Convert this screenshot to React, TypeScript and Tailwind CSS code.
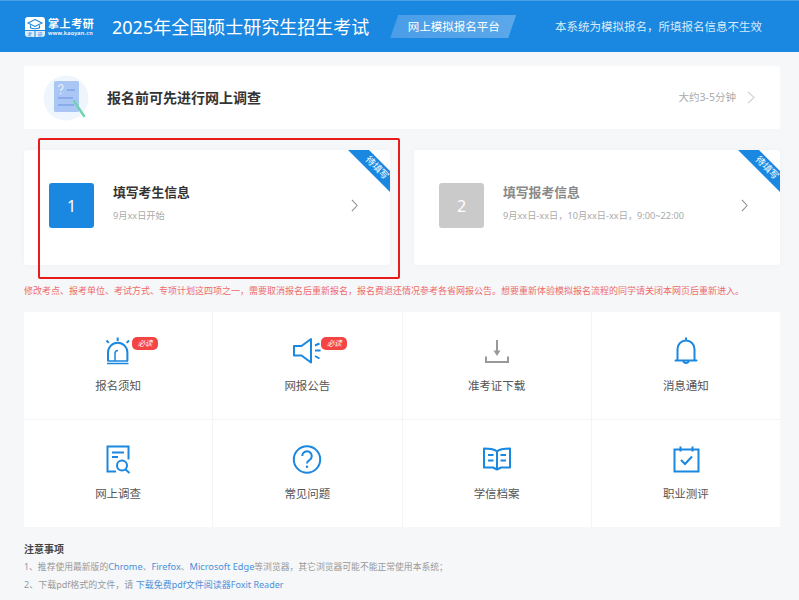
import type { ReactNode } from "react";

const font = "[font-family:'Noto_Sans','Noto_Sans_CJK_SC',sans-serif]";

function Chevron({ className }: { className: string }) {
  return (
    <svg viewBox="0 0 8 14" fill="none" stroke="currentColor" strokeWidth="1.1" preserveAspectRatio="none" className={className}>
      <path d="M1 1 7 7 1 13" />
    </svg>
  );
}

function Logo() {
  return (
    <svg viewBox="0 0 20 20" className="h-[20px] w-[20px] shrink-0">
      <path d="M3 0h14a3 3 0 0 1 3 3v10H0V3a3 3 0 0 1 3-3z" fill="#fff" />
      <path d="M10 2.6 17 6l-7 3.4L3 6z" fill="none" stroke="#1a87e0" strokeWidth="1.1" />
      <path d="M5.5 8.2v2.6c1.6 1.3 7.4 1.3 9 0V8.2" fill="none" stroke="#1a87e0" strokeWidth="1.1" />
      <path d="M0 14h9.5v6H3a3 3 0 0 1-3-3zM10.5 14H20v3a3 3 0 0 1-3 3h-6.5z" fill="#fff" fillOpacity=".85" />
      <text x="2.5" y="18.8" fontSize="4.4" fill="#1a87e0">考</text>
      <text x="13" y="18.8" fontSize="4.4" fill="#1a87e0">研</text>
    </svg>
  );
}

function SurveyArt() {
  return (
    <svg viewBox="0 0 46 46" className="h-[46px] w-[46px] shrink-0">
      <circle cx="23" cy="23" r="22.5" fill="#eef5fd" />
      <rect x="11" y="6" width="25" height="31" rx="1.5" fill="#a9c6f5" />
      <path d="M24 15h8M15 23h15M15 30h16" stroke="#7fa5e8" strokeWidth="1.3" />
      <path d="M15.5 12a2.3 2.3 0 1 1 3.3 2.1c-.9.5-1.1 1-1.1 1.9" fill="none" stroke="#eaf2fd" strokeWidth="1.2" />
      <circle cx="17.7" cy="18.5" r=".8" fill="#eaf2fd" />
      <path d="M31 26 41 41" stroke="#6fd3ae" strokeWidth="2.4" strokeLinecap="round" />
    </svg>
  );
}

function StepCard({
  num,
  title,
  sub,
  active,
}: {
  num: string;
  title: string;
  sub: string;
  active?: boolean;
}) {
  return (
    <div className="relative flex h-[115px] items-start rounded-[3px] bg-white pt-[33px] pr-[32px] pl-[25px] shadow-[0_0_6px_rgba(0,0,0,0.03)]">
      <div
        className={`flex h-[45px] w-[45px] shrink-0 items-center justify-center rounded-[3px] text-[16px] text-white ${
          active ? "bg-[#1a87e0]" : "bg-[#cacaca]"
        }`}
      >
        {num}
      </div>
      <div className="ml-[19px] min-w-0 flex-1">
        <div className={`text-[12.8px] leading-[19px] font-bold ${active ? "text-[#333333]" : "text-[#888888]"}`}>
          {title}
        </div>
        <div className="mt-[7px] text-[9.2px] leading-[14px] whitespace-nowrap text-[#aaaaaa]">{sub}</div>
      </div>
      <Chevron className="mt-[16px] h-[13px] w-[7px] shrink-0 text-[#888888]" />
      <div className="absolute top-0 right-0 h-[42px] w-[42px] bg-[#1a87e0] [clip-path:polygon(0_0,50%_0,100%_50%,100%_100%)]">
        <span className="absolute top-[11px] left-[15px] w-[26px] rotate-45 text-center text-[9.5px] leading-[12px] font-medium whitespace-nowrap text-[#e3f1fc]">
          待填写
        </span>
      </div>
    </div>
  );
}

const stroke = {
  fill: "none",
  stroke: "currentColor",
  strokeWidth: 2,
} as const;

const icons: Record<string, ReactNode> = {
  alarm: (
    <svg viewBox="0 0 30 30" className="h-[30px] w-[30px]" {...stroke}>
      <path d="M5 24V15.5a9.7 9.7 0 0 1 19.4 0V24" />
      <path d="M12 24v-7.5a3 3 0 0 1 3-3" strokeWidth="1.5" />
      <path d="M4.5 24h20.5M4 26.5h21.5" strokeWidth="1.5" />
      <path d="M14.7 0.5v3.6M3.5 3.5l2.3 2.4M26 3.5l-2.3 2.4" />
    </svg>
  ),
  horn: (
    <svg viewBox="0 0 30 30" className="h-[30px] w-[30px]" {...stroke}>
      <path d="M19 2v23.5L9.5 18.5H2V9h7.5z" strokeLinejoin="round" />
      <path d="M23 8.5l4.5-2M23 13.5h5.5M23 19l4.5 2.5" />
    </svg>
  ),
  download: (
    <svg viewBox="0 0 30 30" className="h-[30px] w-[30px]" {...stroke}>
      <path d="M15 3v13" />
      <path d="M11.5 13.5h7L15 19z" fill="currentColor" stroke="none" />
      <path d="M4 19.5V25h22v-5.5" />
    </svg>
  ),
  bell: (
    <svg viewBox="0 0 30 30" className="h-[30px] w-[30px]" {...stroke}>
      <path d="M6.5 23V12a8.5 8.5 0 0 1 17 0v11" />
      <path d="M4.5 23.5h21" strokeLinecap="round" />
      <path d="M15 0.5V3.5" />
      <path d="M12.3 24a2.8 2.8 0 0 0 5.4 0" />
    </svg>
  ),
  survey: (
    <svg viewBox="0 0 30 30" className="h-[30px] w-[30px]" {...stroke}>
      <path d="M13 26.5H4.5v-25h21v13" />
      <path d="M9 7.5h12M9 12h6" />
      <circle cx="19" cy="20.5" r="5" />
      <path d="M22.5 24.5 26.5 28" />
    </svg>
  ),
  question: (
    <svg viewBox="0 0 30 30" className="h-[30px] w-[30px]" {...stroke}>
      <circle cx="15" cy="14.5" r="13.2" />
      <path d="M10.2 11a4.8 4.8 0 1 1 7.2 4.2c-1.6.9-2.4 1.7-2.4 3.4" />
      <circle cx="15" cy="21.8" r="1.2" fill="currentColor" stroke="none" />
    </svg>
  ),
  book: (
    <svg viewBox="0 0 30 30" className="h-[30px] w-[30px]" {...stroke}>
      <path d="M15 6.5C13 4.5 10 3.5 2 3.5v19h9l4 2 4-2h9v-19c-8 0-11 1-13 3z" strokeLinejoin="round" />
      <path d="M15 6.5V24" />
      <path d="M6 10h5.5M6 15.5h5.5M18.5 10H24M18.5 15.5H24" />
    </svg>
  ),
  calendar: (
    <svg viewBox="0 0 30 30" className="h-[30px] w-[30px]" {...stroke}>
      <path d="M3.5 4.5h24v22h-24z" />
      <path d="M9.5 1.5v5M21.5 1.5v5" />
      <path d="M10 15l4 4 7-7.5" />
    </svg>
  ),
};

const entries = [
  { icon: "alarm", label: "报名须知", must: true },
  { icon: "horn", label: "网报公告", must: true },
  { icon: "download", label: "准考证下载", gray: true },
  { icon: "bell", label: "消息通知" },
  { icon: "survey", label: "网上调查" },
  { icon: "question", label: "常见问题" },
  { icon: "book", label: "学信档案" },
  { icon: "calendar", label: "职业测评" },
];

export default function App() {
  return (
    <div className={`relative h-[600px] overflow-hidden bg-[#f6f7f9] ${font}`}>
      <header className="flex h-[52px] items-center border-t border-[#4aa0e6] bg-[#1a87e0] pl-[25px] text-white">
        <Logo />
        <div className="ml-[3px] w-[48px]">
          <div className="text-[11px] leading-[13px] font-bold tracking-[0.6px] whitespace-nowrap">掌上考研</div>
          <div className="text-[5.5px] leading-[7px] font-semibold tracking-[0.2px] whitespace-nowrap">www.kaoyan.cn</div>
        </div>
        <h1 className="ml-[16px] text-[18px] leading-[26px] whitespace-nowrap">2025年全国硕士研究生招生考试</h1>
        <div className="ml-[21px] flex h-[23px] w-[126px] items-center justify-center bg-gradient-to-r from-[#4a9de8] to-[#5ba8ea] pl-[1px] text-[11.5px] whitespace-nowrap [clip-path:polygon(8px_0,100%_0,calc(100%-8px)_100%,0_100%)]">
          网上模拟报名平台
        </div>
        <div className="ml-auto pr-[37px] text-[11.5px] whitespace-nowrap text-[#d7ebfb]">
          {"本系统为模拟报名\uFF0C所填报名信息不生效"}
        </div>
      </header>

      <main className="mr-[19px] ml-[24px] pt-[14px]">
        <section className="flex h-[63px] items-center rounded-[2px] bg-white pr-[25px] pl-[19px]">
          <SurveyArt />
          <div className="ml-[18px] flex-1 text-[14px] font-bold text-[#333333]">报名前可先进行网上调查</div>
          <span className="text-[10.5px] text-[#aaaaaa]">大约3-5分钟</span>
          <Chevron className="ml-[11px] h-[13px] w-[8px] text-[#cccccc]" />
        </section>

        <section className="mt-[21px] grid grid-cols-2 gap-[24px]">
          <StepCard num="1" title="填写考生信息" sub="9月xx日开始" active />
          <StepCard num="2" title="填写报考信息" sub={"9月xx日-xx日\uFF0C10月xx日-xx日\uFF0C9:00~22:00"} />
        </section>

        <p className="mt-[19px] text-[9px] leading-[14px] whitespace-nowrap text-[#ee6b6b]">
          {"修改考点、报考单位、考试方式、专项计划这四项之一\uFF0C需要取消报名后重新报名\uFF0C报名费退还情况参考各省网报公告。想要重新体验模拟报名流程的同学请关闭本网页后重新进入。"}
        </p>

        <section className="mt-[14px] grid grid-cols-4 gap-px bg-[#f3f4f6]">
          {entries.map((e) => (
            <div key={e.label} className="flex h-[107px] flex-col items-center bg-white pt-[25px]">
              <div className={`relative h-[30px] w-[30px] ${e.gray ? "text-[#999999]" : "text-[#1a87e0]"}`}>
                {icons[e.icon]}
                {e.must && (
                  <span className="absolute top-0 left-[29px] flex h-[13px] w-[26px] items-center justify-center rounded-[5px] bg-[#f44444] text-[7.5px] whitespace-nowrap text-white italic">
                    必读
                  </span>
                )}
              </div>
              <div className="mt-[10px] text-[11.5px] leading-[18px] text-[#555555]">{e.label}</div>
            </div>
          ))}
        </section>

        <section className="mt-[13px] text-[8.8px] leading-[18px] text-[#999999]">
          <div className="text-[10px] font-bold text-[#444444]">注意事项</div>
          <div className="whitespace-nowrap">
            1、推荐使用最新版的<span className="text-[9.2px] text-[#4a90d9]">Chrome</span>、<span className="text-[9.2px] text-[#4a90d9]">Firefox</span>、
            <span className="text-[9.2px] text-[#4a90d9]">Microsoft Edge</span>
            {"等浏览器\uFF0C其它浏览器可能不能正常使用本系统\uFF1B"}
          </div>
          <div className="whitespace-nowrap text-[9px]">
            {"2、下载pdf格式的文件\uFF0C请 "}
            <span className="text-[#4a90d9]">下载免费pdf文件阅读器Foxit Reader</span>
          </div>
        </section>
      </main>

      <div className="absolute top-[138px] left-[38px] h-[141px] w-[362px] rounded-[2px] border-2 border-[#e81c1c]" />
    </div>
  );
}
